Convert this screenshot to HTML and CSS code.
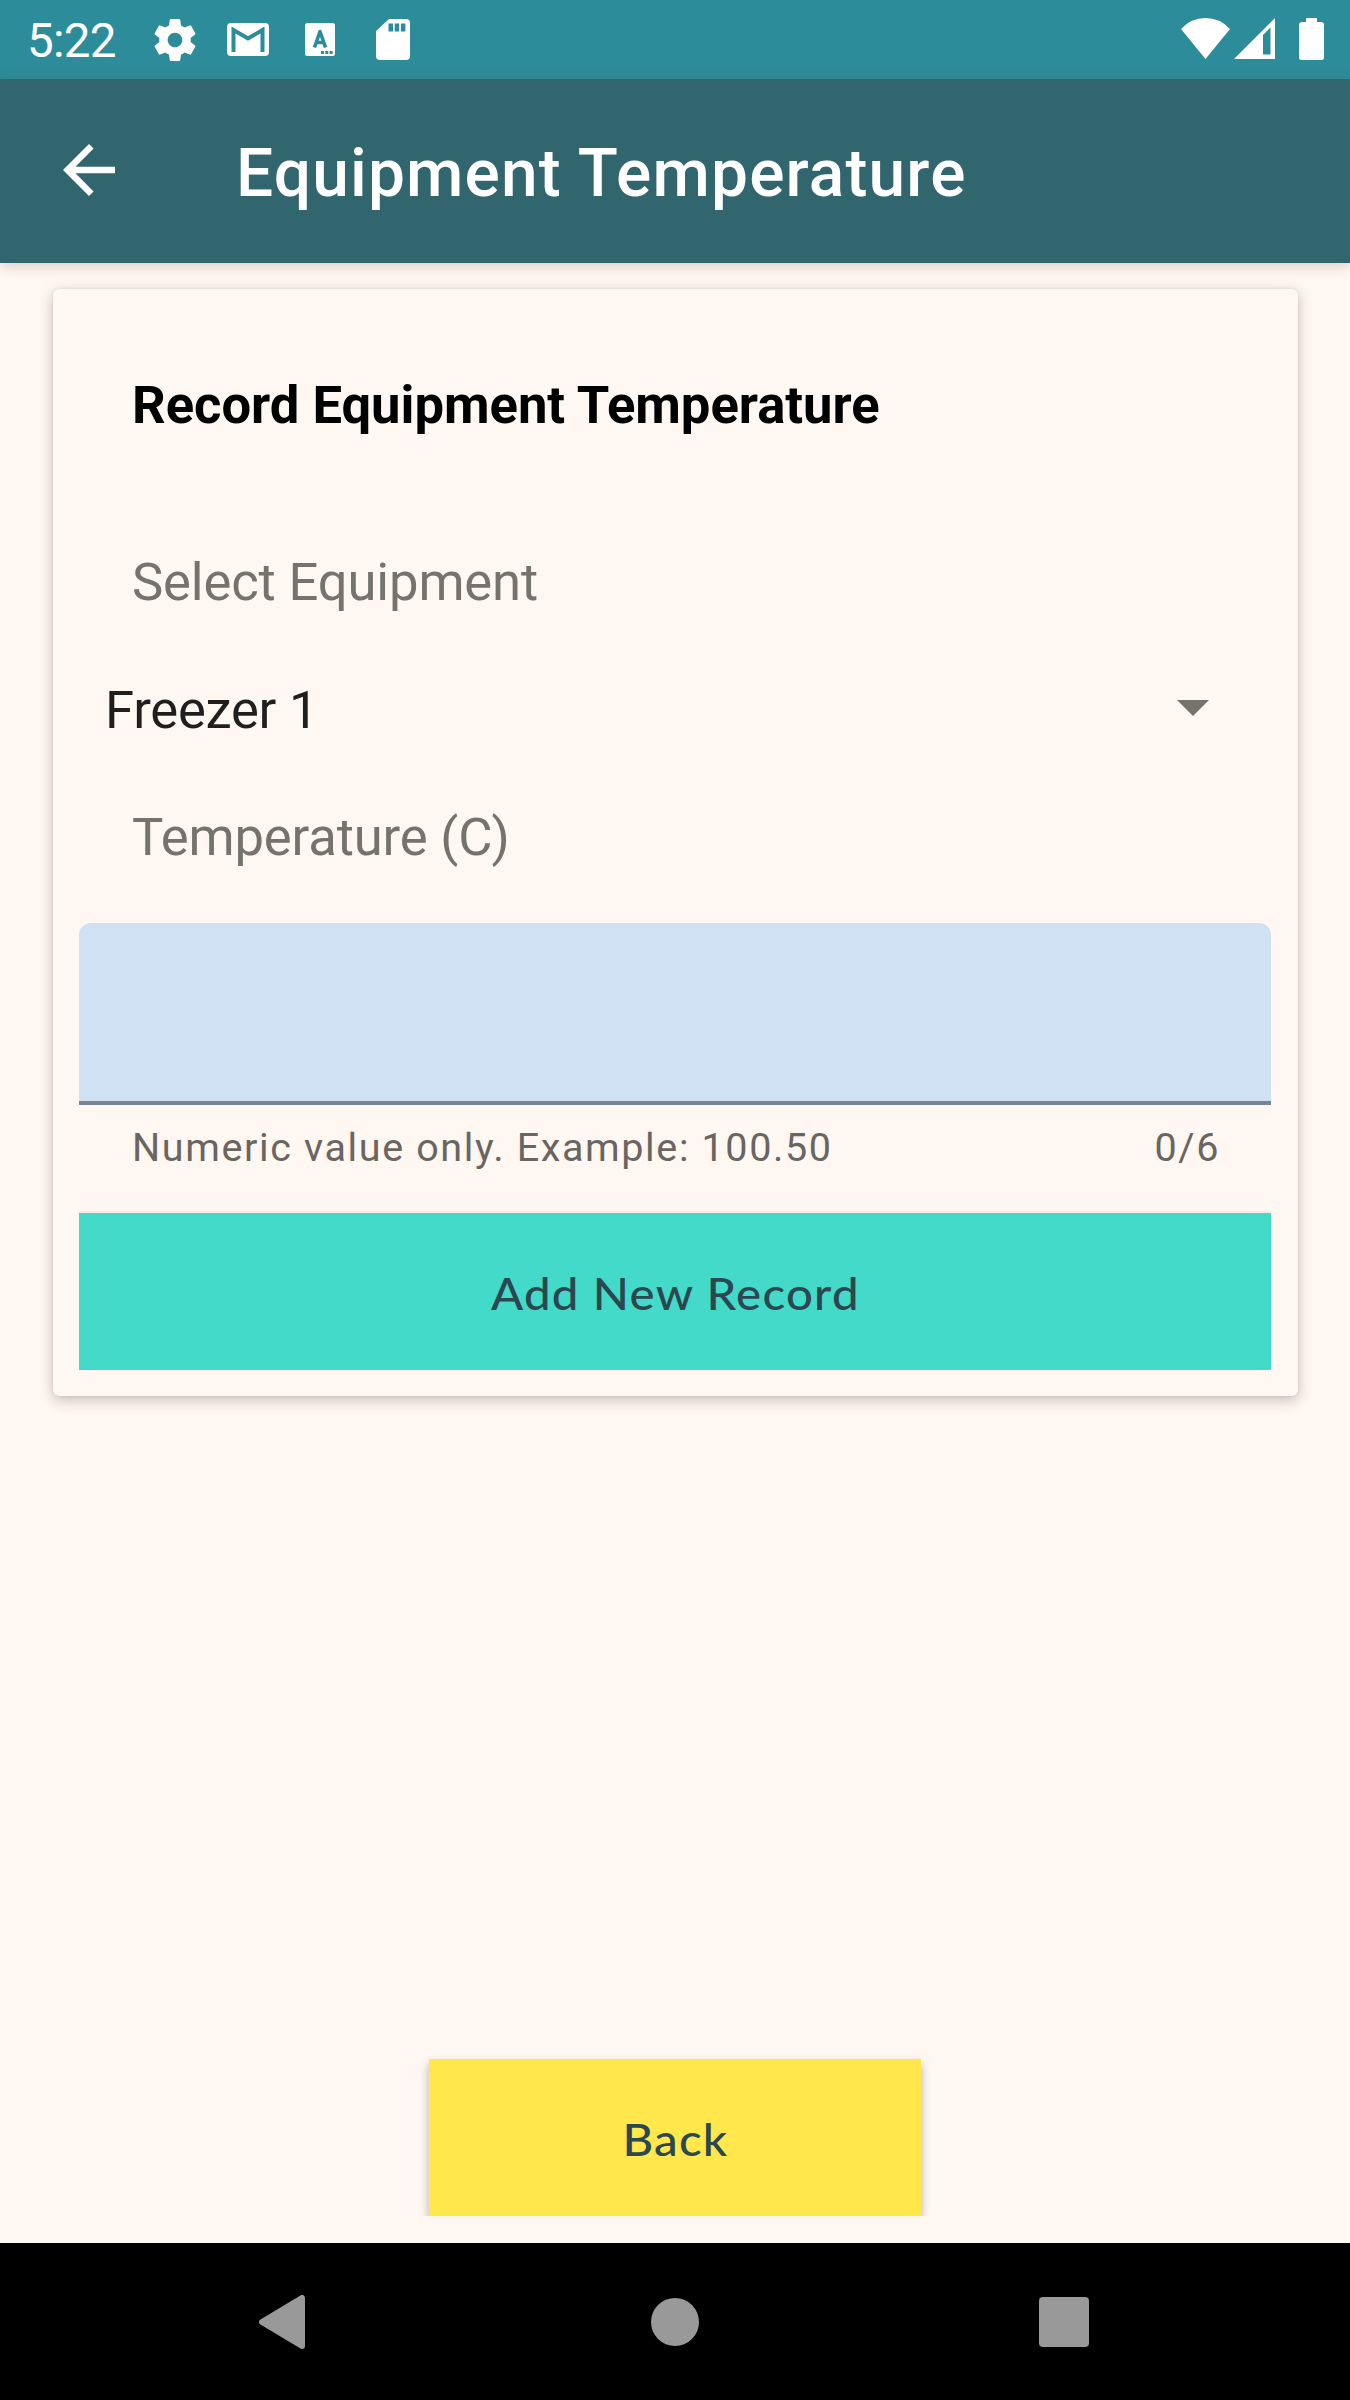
FILE: index.html
```html
<!DOCTYPE html>
<html lang="en">
<head>
<meta charset="utf-8">
<title>Equipment Temperature</title>
<link rel="stylesheet" href="styles.css">
</head>
<body>
<div class="status">
  <span class="clock">5:22</span>
  <svg class="gear" width="42" height="42" viewBox="2 2 20 20"><path fill="#fff" d="M19.43 12.98c.04-.32.07-.64.07-.98s-.03-.66-.07-.98l2.11-1.65c.19-.15.24-.42.12-.64l-2-3.46c-.12-.22-.39-.3-.61-.22l-2.49 1c-.52-.4-1.08-.73-1.69-.98l-.38-2.65C14.46 2.18 14.25 2 14 2h-4c-.25 0-.46.18-.49.42l-.38 2.65c-.61.25-1.17.59-1.69.98l-2.49-1c-.23-.09-.49 0-.61.22l-2 3.46c-.13.22-.07.49.12.64l2.11 1.65c-.04.32-.07.65-.07.98s.03.66.07.98l-2.11 1.65c-.19.15-.24.42-.12.64l2 3.46c.12.22.39.3.61.22l2.49-1c.52.4 1.08.73 1.69.98l.38 2.65c.03.24.24.42.49.42h4c.25 0 .46-.18.49-.42l.38-2.65c.61-.25 1.17-.59 1.69-.98l2.49 1c.23.09.49 0 .61-.22l2-3.46c.12-.22.07-.49-.12-.64l-2.11-1.65zM12 15.5c-1.93 0-3.5-1.57-3.5-3.5s1.57-3.5 3.5-3.5 3.5 1.57 3.5 3.5-1.57 3.5-3.5 3.5z"/></svg>
  <svg class="mail" width="42" height="33" viewBox="0 0 42 33"><rect width="42" height="33" rx="4" fill="#fff"/><path d="M6.500 29V7L21 15.500L35.500 7V29" fill="none" stroke="#2d8c99" stroke-width="4"/></svg>
  <svg class="lang" width="30" height="33" viewBox="0 0 30 33"><rect width="30" height="33" rx="2.500" fill="#fff"/><path d="M9.500 24.500L15 8.500L20.500 24.500M11 19.500H19" fill="none" stroke="#2d8c99" stroke-width="3.600" stroke-linejoin="round"/><path d="M16 28h3v3h-3zM20.300 28h3v3h-3zM24.600 28h3v3h-3z" fill="#2d8c99"/></svg>
  <svg class="sd" width="34" height="41" viewBox="0 0 34 41"><path d="M13 0H30Q34 0 34 4V37Q34 41 30 41H4Q0 41 0 37V12Z" fill="#fff"/><path d="M12.500 4.500h4.500v8h-4.500zM18.700 4.500h4.500v8h-4.500zM24.900 4.500h4.500v8h-4.500z" fill="#2d8c99"/></svg>
  <svg class="wifi" width="49" height="41" viewBox="0 0 49 41"><path d="M0 11Q10 0 24.500 0T49 11L24.500 41Z" fill="#fff"/></svg>
  <svg class="signal" width="41" height="41" viewBox="0 0 41 41"><path fill-rule="evenodd" d="M0 41L41 0V41ZM29 17V36.500H36.500V9.500Z" fill="#fff"/></svg>
  <svg class="battery" width="25" height="42" viewBox="0 0 25 42"><path d="M7 0H18V4H22Q25 4 25 7V39.500Q25 42 22.500 42H2.500Q0 42 0 39.500V7Q0 4 3 4H7Z" fill="#fff"/></svg>
</div>
<header class="toolbar">
  <svg class="up" width="52" height="52" viewBox="4 4 16 16"><path fill="#fff" d="M20 11H7.830l5.590-5.590L12 4l-8 8 8 8 1.410-1.410L7.830 13H20z"/></svg>
  <h1 class="title">Equipment Temperature</h1>
</header>
<main class="content">
  <section class="card">
    <h2 class="heading">Record Equipment Temperature</h2>
    <div class="label label-equipment">Select Equipment</div>
    <div class="spinner"><span class="spinner-value">Freezer 1</span><svg width="32" height="16" viewBox="0 0 32 16"><path d="M0 0H32L16 16Z" fill="#76726c"/></svg></div>
    <div class="label label-temperature">Temperature (C)</div>
    <div class="field"></div>
    <div class="helper"><span>Numeric value only. Example: 100.50</span><span class="count">0/6</span></div>
    <div class="button add"><span class="button-text">Add New Record</span></div>
  </section>
  <div class="footer"><div class="button back"><span class="button-text">Back</span></div></div>
</main>
<nav class="navbar">
  <svg width="46" height="54" viewBox="0 0 46 54"><path d="M3 27L43 3V51Z" fill="#999" stroke="#999" stroke-width="6" stroke-linejoin="round"/></svg>
  <svg class="home" width="48" height="48" viewBox="0 0 48 48"><circle cx="24" cy="24" r="24" fill="#999"/></svg>
  <svg width="50" height="50" viewBox="0 0 50 50"><rect width="50" height="50" rx="4" fill="#999"/></svg>
</nav>
</body>
</html>
```

FILE: styles.css
```css
* { box-sizing: border-box; }
body {
  margin: 0;
  width: 1350px;
  height: 2400px;
  display: flex;
  flex-direction: column;
  overflow: hidden;
  background: #fff7f1;
  font-family: Roboto, "Liberation Sans", sans-serif;
  white-space: nowrap;
}
svg { display: block; flex: none; }
.status {
  height: 79px;
  flex: none;
  display: flex;
  align-items: flex-start;
  padding: 18px 26px 0 27px;
  background: #2d8c99;
}
.clock {
  width: 127px;
  line-height: 47px;
  font-size: 47.500px;
  letter-spacing: -0.700px;
  color: #fff;
}
.gear { margin-top: 1px; }
.mail { margin: 5px 0 0 31px; }
.lang { margin: 5px 0 0 36px; }
.sd { margin: 1px 0 0 41px; }
.wifi { margin-left: auto; }
.signal { margin-left: 4px; }
.battery { margin-left: 24px; }
.toolbar {
  height: 184px;
  flex: none;
  display: flex;
  align-items: center;
  padding: 0 63px;
  background: #32666f;
  box-shadow: 0 3px 12px rgba(90, 50, 40, 0.22);
}
.up { margin-top: -3px; }
.title {
  margin: 5px 0 0 121px;
  font-size: 65.800px;
  font-weight: 500;
  letter-spacing: 1.180px;
  color: #fff;
}
.content {
  height: 1980px;
  flex: none;
  display: flex;
  flex-direction: column;
  justify-content: space-between;
  padding: 26px 52px 27px 53px;
}
.card {
  height: 1107px;
  padding: 0 27px 26px 26px;
  border-radius: 6px;
  background: #fff7f1;
  box-shadow: 0 4px 14px rgba(80, 60, 50, 0.3), 0 0 3px rgba(80, 60, 50, 0.12);
}
.heading {
  margin: -1px 0 1px 53px;
  font-size: 52.600px;
  line-height: 234px;
  font-weight: 700;
  letter-spacing: -0.030px;
  color: #000;
}
.label {
  margin-left: 53px;
  font-size: 52.600px;
  letter-spacing: -0.150px;
  color: #76726c;
}
.label-equipment { line-height: 118px; }
.label-temperature { line-height: 116px; }
.spinner {
  height: 138px;
  display: flex;
  align-items: center;
  justify-content: space-between;
  padding: 0 62px 0 26px;
  font-size: 52.600px;
  letter-spacing: -0.250px;
  color: #211f1d;
}
.spinner svg { margin-top: -4px; }
.field {
  height: 182px;
  margin-top: 28px;
  border-bottom: 4px solid #7b8591;
  border-radius: 12px 12px 0 0;
  background: #d0e1f3;
}
.helper {
  height: 85px;
  margin-bottom: 23px;
  display: flex;
  align-items: center;
  justify-content: space-between;
  padding: 0 51px 0 53px;
  font-size: 39.500px;
  letter-spacing: 1.620px;
  color: #6a6561;
}
.button {
  height: 157px;
  display: flex;
  align-items: center;
  justify-content: center;
  font-family: Lato, "Liberation Sans", sans-serif;
  font-size: 45px;
  font-weight: 500;
  letter-spacing: 1.200px;
  color: #2b474f;
}
.button-text {
  margin-top: 2px;
  transform: scaleX(1.052);
}
.add {
  background: #43dac9;
  box-shadow: 0 -2px 1px #f4ebe5;
}
.footer {
  margin: 0 348px 0 346px;
  padding: 30px 30px 0;
  overflow: hidden;
}
.back {
  width: 492px;
  background: #ffe74c;
  box-shadow: 0 5px 9px rgba(60, 40, 40, 0.35);
}
.navbar {
  flex: 1;
  display: flex;
  align-items: center;
  justify-content: space-between;
  padding: 0 261px 0 259px;
  background: #000;
}
.home { margin-left: 6px; }
```
